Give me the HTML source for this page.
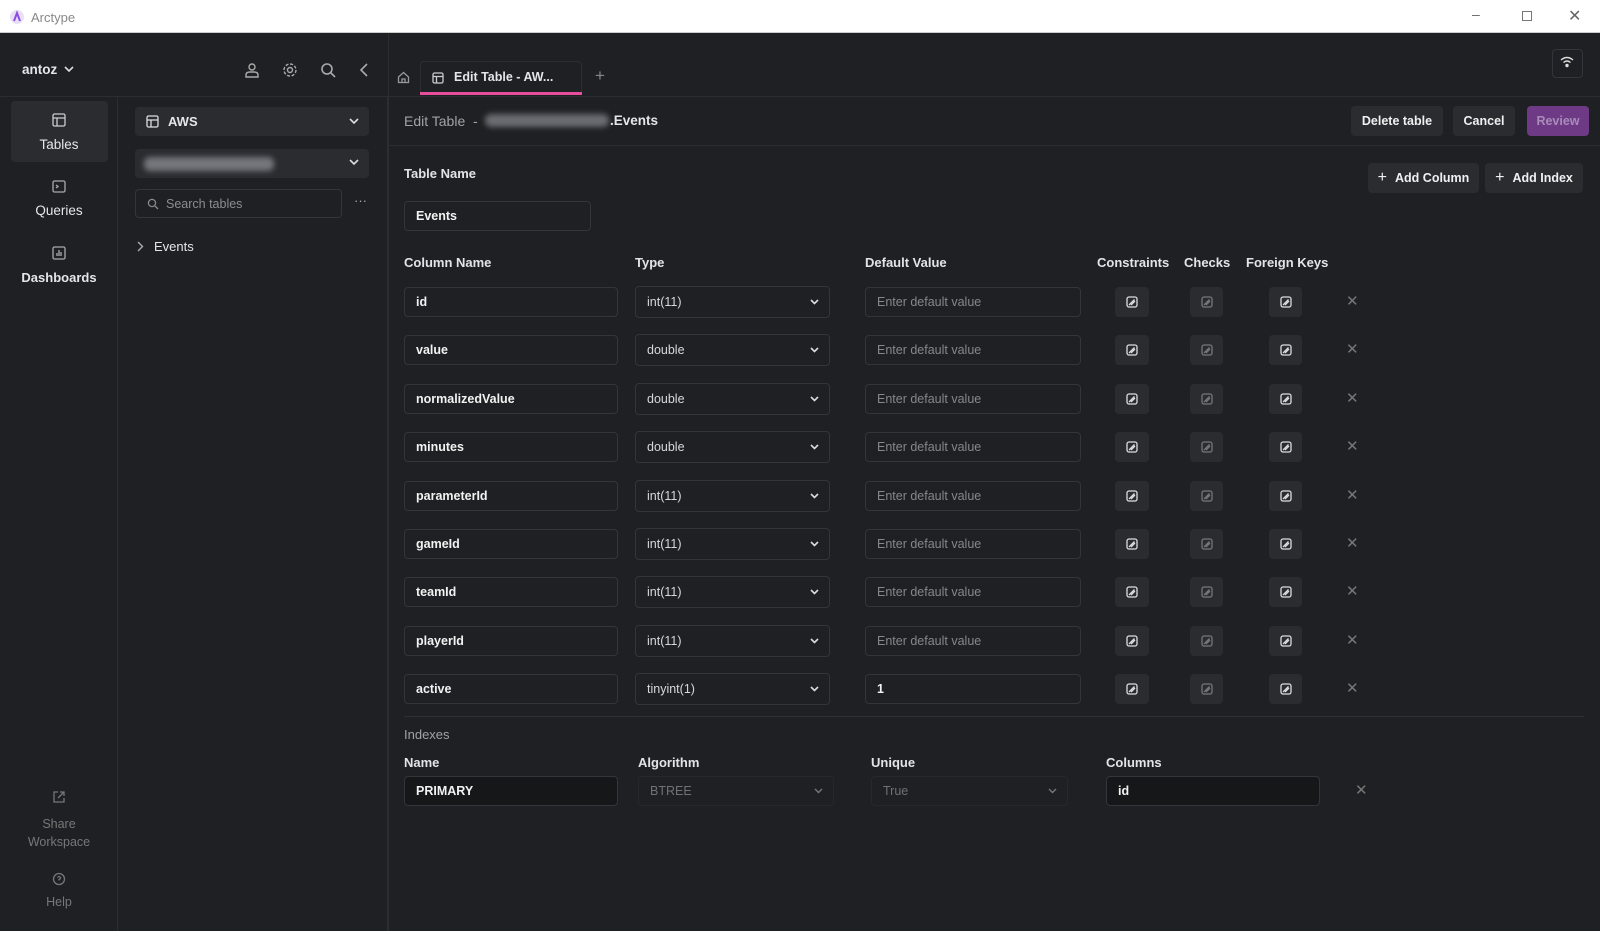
<!DOCTYPE html>
<html><head><meta charset="utf-8">
<style>
*{box-sizing:border-box;margin:0;padding:0}
body{width:1600px;height:931px;background:#1f2024;font-family:"Liberation Sans",sans-serif;color:#e6e6e8;position:relative;overflow:hidden;font-size:13px}
.a{position:absolute}
.t{position:absolute;white-space:nowrap}
.inp{position:absolute;border:1px solid #33353a;border-radius:4px;background:#1f2024;font-size:13px;padding-left:11px;display:flex;align-items:center}
.btn{position:absolute;background:#2a2c30;border-radius:4px;display:flex;align-items:center;justify-content:center;font-size:12.5px;font-weight:bold;color:#f0f0f0}
.ib{position:absolute;width:34px;height:30px;background:#2a2c30;border-radius:4px;display:flex;align-items:center;justify-content:center}
.lbl{position:absolute;font-weight:bold;font-size:13px;color:#e4e4e8}
.chev{position:absolute;right:10px;top:50%;margin-top:-3px}
.b{font-weight:bold;color:#f2f2f2;font-size:12.5px}
</style></head><body>
<div class="a" style="left:0;top:0;width:1600px;height:33px;background:#fff;border-bottom:1px solid #ccc"></div>
<svg class="a" style="left:10px;top:10px" width="14" height="14" viewBox="0 0 14 14"><circle cx="7" cy="7" r="7" fill="#e9e0f7"/><path d="M4 11 L7 3 L10 11" stroke="#8a4fe0" stroke-width="2" fill="none"/></svg>
<div class="t" style="left:31px;top:10px;color:#888;font-size:13px">Arctype</div>
<div class="t" style="left:1472px;top:6px;color:#666;font-size:14px">–</div>
<div class="a" style="left:1522px;top:11px;width:10px;height:10px;border:1px solid #777"></div>
<div class="t" style="left:1568px;top:6px;color:#666;font-size:16px">✕</div>

<div class="a" style="left:0;top:97px;width:118px;height:834px;border-right:1px solid #2c2d32"></div>
<div class="a" style="left:118px;top:97px;width:270px;height:834px;border-right:1px solid #2c2d32"></div>
<div class="a" style="left:0;top:96px;width:388px;height:1px;background:#2c2d32"></div>
<div class="a" style="left:388px;top:34px;width:1px;height:897px;background:#2c2d32"></div>
<div class="a" style="left:389px;top:96px;width:1211px;height:1px;background:#2c2d32"></div>

<div class="t" style="left:22px;top:62px;font-size:13.5px;font-weight:bold">antoz</div>
<svg class="a" style="left:64px;top:66px" width="10" height="7"><path d="M1 1 L5 5 L9 1" stroke="#ddd" stroke-width="1.6" fill="none"/></svg>
<svg class="a" style="left:244px;top:62px" width="16" height="16" fill="none" stroke="#aaa" stroke-width="1.4"><circle cx="8" cy="5" r="3"/><path d="M2 15 V13 Q2 10 6 10 H10 Q14 10 14 13 V15 Z"/></svg>
<svg class="a" style="left:282px;top:62px" width="16" height="16" fill="none" stroke="#aaa" stroke-width="1.4"><circle cx="8" cy="8" r="2.5"/><circle cx="8" cy="8" r="6" stroke-dasharray="3 1.7"/></svg>
<svg class="a" style="left:320px;top:62px" width="16" height="16" fill="none" stroke="#aaa" stroke-width="1.6"><circle cx="7" cy="7" r="5"/><path d="M11 11 L15 15"/></svg>
<svg class="a" style="left:359px;top:62px" width="10" height="16" fill="none" stroke="#aaa" stroke-width="1.6"><path d="M8 2 L2 8 L8 14"/></svg>

<div class="a" style="left:11px;top:101px;width:97px;height:61px;background:#2a2c30;border-radius:4px"></div>
<svg class="a" style="left:52px;top:113px" width="14" height="14" fill="none" stroke="#ccc" stroke-width="1.3"><rect x="1" y="1" width="12" height="12" rx="1.5"/><path d="M1 5 H13 M5 5 V13"/></svg>
<div class="t" style="left:0;width:118px;text-align:center;top:137px;font-size:13.5px">Tables</div>
<svg class="a" style="left:52px;top:180px" width="14" height="13" fill="none" stroke="#aaa" stroke-width="1.3"><rect x="1" y="1" width="12" height="11" rx="1.5"/><path d="M4 5 L6 6.5 L4 8"/></svg>
<div class="t" style="left:0;width:118px;text-align:center;top:203px;font-size:13.5px">Queries</div>
<svg class="a" style="left:52px;top:246px" width="14" height="14" fill="none" stroke="#aaa" stroke-width="1.3"><rect x="1" y="1" width="12" height="12" rx="1.5"/><path d="M5 10 V7 M7 10 V4 M9 10 V6"/></svg>
<div class="t" style="left:0;width:118px;text-align:center;top:270px;font-size:13px;font-weight:bold">Dashboards</div>
<svg class="a" style="left:52px;top:790px" width="14" height="14" fill="none" stroke="#777" stroke-width="1.3"><path d="M6 2 H2 V12 H12 V8 M8 2 H12 V6 M12 2 L6 8"/></svg>
<div class="t" style="left:0;width:118px;text-align:center;top:815px;font-size:12.5px;color:#777;line-height:18px">Share<br>Workspace</div>
<svg class="a" style="left:52px;top:872px" width="14" height="14" fill="none" stroke="#777" stroke-width="1.3"><circle cx="7" cy="7" r="5.5"/><path d="M5.5 5.5 Q7 3.5 8.5 5.5 Q8.5 7 7 7.5 V8.5"/></svg>
<div class="t" style="left:0;width:118px;text-align:center;top:895px;font-size:12.5px;color:#777">Help</div>

<div class="a" style="left:135px;top:107px;width:234px;height:29px;background:#2a2c30;border-radius:4px"></div>
<svg class="a" style="left:146px;top:115px" width="13" height="13" fill="none" stroke="#ddd" stroke-width="1.3"><rect x="1" y="1" width="11" height="11" rx="1.5"/><path d="M1 5 H12 M5 5 V12"/></svg>
<div class="t" style="left:168px;top:114px;font-weight:bold;font-size:13px">AWS</div>
<svg class="a" style="left:349px;top:118px" width="10" height="7"><path d="M1 1 L5 5 L9 1" stroke="#ddd" stroke-width="1.6" fill="none"/></svg>
<div class="a" style="left:135px;top:149px;width:234px;height:29px;background:#2a2c30;border-radius:4px"></div>
<div class="a" style="left:144px;top:157px;width:130px;height:14px;background:#74767c;border-radius:6px;filter:blur(3px)"></div>
<svg class="a" style="left:349px;top:159px" width="10" height="7"><path d="M1 1 L5 5 L9 1" stroke="#ddd" stroke-width="1.6" fill="none"/></svg>
<div class="a" style="left:135px;top:189px;width:207px;height:29px;border:1px solid #33353a;border-radius:4px"></div>
<svg class="a" style="left:147px;top:198px" width="12" height="12" fill="none" stroke="#888" stroke-width="1.3"><circle cx="5" cy="5" r="3.6"/><path d="M8 8 L11 11"/></svg>
<div class="t" style="left:166px;top:197px;color:#8b8d92;font-size:12.5px">Search tables</div>
<div class="t" style="left:354px;top:193px;color:#aaa;font-size:13px">···</div>
<svg class="a" style="left:137px;top:241px" width="7" height="11" fill="none" stroke="#aaa" stroke-width="1.4"><path d="M1 1 L5.5 5.5 L1 10"/></svg>
<div class="t" style="left:154px;top:239px;font-size:13px">Events</div>

<svg class="a" style="left:397px;top:71px" width="13" height="13" fill="none" stroke="#999" stroke-width="1.3"><path d="M1.5 6 L6.5 1.5 L11.5 6 V11.5 H1.5 Z M5 11.5 V8 H8 V11.5"/></svg>
<div class="a" style="left:420px;top:61px;width:162px;height:34px;border:1px solid #2c2d32;border-bottom:none;border-radius:4px 4px 0 0"></div>
<div class="a" style="left:420px;top:92px;width:162px;height:3px;background:#e64d9a"></div>
<svg class="a" style="left:432px;top:72px" width="12" height="12" fill="none" stroke="#ccc" stroke-width="1.3"><rect x="1" y="1" width="10" height="10" rx="1.5"/><path d="M1 4.5 H11 M4.5 4.5 V11"/></svg>
<div class="t" style="left:454px;top:70px;font-size:12.5px;font-weight:bold">Edit Table - AW...</div>
<div class="t" style="left:595px;top:66px;color:#888;font-size:17px">+</div>
<div class="a" style="left:1552px;top:49px;width:31px;height:29px;border:1px solid #33353a;border-radius:4px"></div>
<svg class="a" style="left:1560px;top:56px" width="14" height="12" fill="none" stroke="#ddd" stroke-width="1.4"><path d="M1 4 Q7 -1 13 4 M3.5 6.5 Q7 3.5 10.5 6.5"/><circle cx="7" cy="9.5" r="1" fill="#ddd"/></svg>

<div class="t" style="left:404px;top:113px;color:#a0a2a8;font-size:14px">Edit Table &nbsp;-</div>
<div class="a" style="left:485px;top:114px;width:124px;height:13px;background:#6a6c72;border-radius:6px;filter:blur(3px)"></div>
<div class="t" style="left:610px;top:113px;font-size:13.5px;font-weight:bold">.Events</div>
<div class="a" style="left:389px;top:145px;width:1211px;height:1px;background:#2c2d32"></div>
<div class="btn" style="left:1351px;top:106px;width:92px;height:30px">Delete table</div>
<div class="btn" style="left:1453px;top:106px;width:62px;height:30px">Cancel</div>
<div class="btn" style="left:1527px;top:106px;width:62px;height:30px;background:#6e3a86;color:#a98bb8">Review</div>

<div class="lbl" style="left:404px;top:166px">Table Name</div>
<div class="inp b" style="left:404px;top:201px;width:187px;height:30px">Events</div>
<div class="btn" style="left:1368px;top:163px;width:111px;height:30px"><span style="font-size:16px;font-weight:normal;margin-right:8px">+</span>Add Column</div>
<div class="btn" style="left:1485px;top:163px;width:98px;height:30px"><span style="font-size:16px;font-weight:normal;margin-right:8px">+</span>Add Index</div>

<div class="lbl" style="left:404px;top:255px">Column Name</div>
<div class="lbl" style="left:635px;top:255px">Type</div>
<div class="lbl" style="left:865px;top:255px">Default Value</div>
<div class="lbl" style="left:1097px;top:255px">Constraints</div>
<div class="lbl" style="left:1184px;top:255px">Checks</div>
<div class="lbl" style="left:1246px;top:255px">Foreign Keys</div>

<div id="rows"></div>
<script>
var rows=[["id","int(11)",""],["value","double",""],["normalizedValue","double",""],["minutes","double",""],["parameterId","int(11)",""],["gameId","int(11)",""],["teamId","int(11)",""],["playerId","int(11)",""],["active","tinyint(1)","1"]];
var ic=function(c){return '<svg width="12" height="12" fill="none" stroke="'+c+'" stroke-width="1.3"><rect x="1" y="1" width="10" height="10" rx="2"/><path d="M3 9 L8.5 3.5 M5 9 L9 5"/></svg>';};
var h='';
rows.forEach(function(r,i){var y=287+i*48.4;
h+='<div class="inp b" style="left:404px;top:'+y+'px;width:214px;height:30px">'+r[0]+'</div>';
h+='<div class="inp" style="left:635px;top:'+(y-1)+'px;width:195px;height:32px;color:#d8d8dc;font-size:12.5px">'+r[1]+'<svg class="chev" width="9" height="7"><path d="M1 1 L4.5 4.5 L8 1" stroke="#ddd" stroke-width="1.6" fill="none"/></svg></div>';
h+='<div class="inp'+(r[2]?' b':'')+'" style="left:865px;top:'+y+'px;width:216px;height:30px;'+(r[2]?'':'color:#85878c;font-size:12.5px')+'">'+(r[2]||'Enter default value')+'</div>';
h+='<div class="ib" style="left:1115px;top:'+y+'px">'+ic('#ddd')+'</div>';
h+='<div class="ib" style="left:1190px;top:'+y+'px;width:33px">'+ic('#777')+'</div>';
h+='<div class="ib" style="left:1269px;top:'+y+'px;width:33px">'+ic('#ddd')+'</div>';
h+='<div class="t" style="left:1346px;top:'+(y+5)+'px;color:#777;font-size:15px">✕</div>';
});
document.getElementById('rows').innerHTML=h;
</script>

<div class="a" style="left:404px;top:716px;width:1180px;height:1px;background:#2e3035"></div>
<div class="t" style="left:404px;top:727px;color:#a0a2a8;font-size:13px">Indexes</div>
<div class="lbl" style="left:404px;top:755px">Name</div>
<div class="lbl" style="left:638px;top:755px">Algorithm</div>
<div class="lbl" style="left:871px;top:755px">Unique</div>
<div class="lbl" style="left:1106px;top:755px">Columns</div>
<div class="inp b" style="left:404px;top:776px;width:214px;height:30px;background:#161719">PRIMARY</div>
<div class="inp" style="left:638px;top:776px;width:196px;height:30px;border-color:#26282c;color:#6f7176;font-size:12.5px">BTREE<svg class="chev" width="9" height="7"><path d="M1 1 L4.5 4.5 L8 1" stroke="#777" stroke-width="1.4" fill="none"/></svg></div>
<div class="inp" style="left:871px;top:776px;width:197px;height:30px;border-color:#26282c;color:#6f7176;font-size:12.5px">True<svg class="chev" width="9" height="7"><path d="M1 1 L4.5 4.5 L8 1" stroke="#777" stroke-width="1.4" fill="none"/></svg></div>
<div class="inp b" style="left:1106px;top:776px;width:214px;height:30px;background:#161719">id</div>
<div class="t" style="left:1355px;top:781px;color:#777;font-size:15px">✕</div>
</body></html>
